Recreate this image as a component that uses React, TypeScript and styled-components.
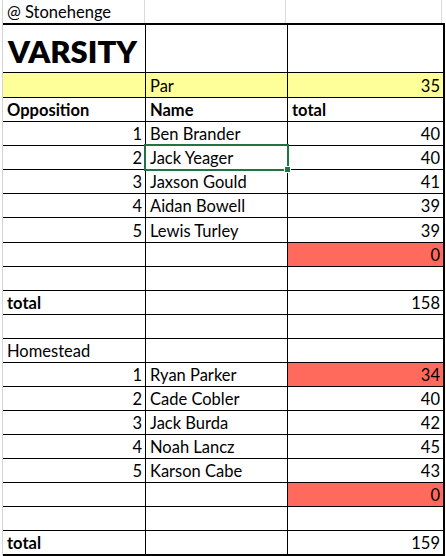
import React from "react";
import styled, { createGlobalStyle } from "styled-components";

const GlobalStyle = createGlobalStyle`
  html, body { margin: 0; padding: 0; background: #ffffff; }
  body { font-family: Lato, "Open Sans", sans-serif; color: #000; }
`;

const COLS = "142px 141px 155px";

const Page = styled.div`
  margin-left: 2px;
  border-left: 1px solid #d4d4d4;
  width: 443px;
  height: 556px;
  overflow: hidden;
`;

const TitleRow = styled.div`
  display: grid;
  grid-template-columns: 142px 141px 156px;
  height: 23px;
`;

const TitleCell = styled.div`
  border-right: 1px solid #dadada;
  display: flex;
  align-items: flex-end;
  padding: 0 4px 1px 4px;
  font-size: 16.5px;
  line-height: 20px;
  white-space: nowrap;
`;

const Sheet = styled.div`
  display: flex;
  flex-direction: column;
  gap: 1px;
  width: 440px;
  background: #000;
  border-top: 2px solid #000;
  border-right: 2px solid #000;
  border-bottom: 2px solid #000;
`;

const Row = styled.div<{ $h: number; $selected?: boolean }>`
  position: relative;
  display: grid;
  grid-template-columns: ${COLS};
  gap: 1px;
  height: ${(p) => p.$h}px;
  ${(p) =>
    p.$selected &&
    `&::before {
      content: "";
      position: absolute;
      left: -2px;
      top: -1px;
      bottom: -1px;
      width: 2px;
      background: #217346;
    }`}
`;

type Fill = "yellow" | "red" | undefined;

const fills: Record<string, string> = {
  yellow: "#ffff99",
  red: "#ff6a5c",
};

const Cell = styled.div<{
  $align?: "left" | "right";
  $bold?: boolean;
  $fill?: Fill;
  $big?: boolean;
  $selected?: boolean;
}>`
  position: relative;
  display: flex;
  align-items: flex-end;
  justify-content: ${(p) => (p.$align === "right" ? "flex-end" : "flex-start")};
  background: ${(p) => (p.$fill ? fills[p.$fill] : "#ffffff")};
  padding: ${(p) => (p.$big ? "0 4px 1px 5px" : "0 3px 1px 4px")};
  font-size: ${(p) => (p.$big ? "31px" : "16.5px")};
  font-weight: ${(p) => (p.$big ? 800 : p.$bold ? 700 : 400)};
  line-height: ${(p) => (p.$big ? "40px" : "20px")};
  white-space: nowrap;
  overflow: visible;
  z-index: ${(p) => (p.$selected ? 2 : "auto")};
`;

const Selection = styled.span`
  position: absolute;
  inset: -2px;
  border: 2px solid #217346;
  pointer-events: none;
`;

const Handle = styled.span`
  position: absolute;
  right: -3px;
  bottom: -3px;
  width: 5px;
  height: 5px;
  background: #217346;
  box-shadow: 0 0 0 1px #ffffff;
  pointer-events: none;
`;

type CellData = {
  text?: string;
  align?: "left" | "right";
  bold?: boolean;
  fill?: Fill;
  big?: boolean;
  selected?: boolean;
};

type RowData = { h: number; selected?: boolean; cells: CellData[] };

const player = (
  n: number,
  name: string,
  score: number,
  opts: { h?: number; red?: boolean; selected?: boolean } = {}
): RowData => ({
  h: opts.h ?? 23,
  selected: opts.selected,
  cells: [
    { text: String(n), align: "right" },
    { text: name, selected: opts.selected },
    { text: String(score), align: "right", fill: opts.red ? "red" : undefined },
  ],
});

const empty: RowData = { h: 23, cells: [{}, {}, {}] };
const zeroRow: RowData = {
  h: 23,
  cells: [{}, {}, { text: "0", align: "right", fill: "red" }],
};
const totalRow = (v: number): RowData => ({
  h: 23,
  cells: [{ text: "total", bold: true }, {}, { text: String(v), align: "right" }],
});

const rows: RowData[] = [
  { h: 47, cells: [{ text: "VARSITY", big: true }, {}, {}] },
  {
    h: 24,
    cells: [
      { fill: "yellow" },
      { text: "Par", fill: "yellow" },
      { text: "35", align: "right", fill: "yellow" },
    ],
  },
  {
    h: 23,
    cells: [
      { text: "Opposition", bold: true },
      { text: "Name", bold: true },
      { text: "total", bold: true },
    ],
  },
  player(1, "Ben Brander", 40),
  player(2, "Jack Yeager", 40, { selected: true }),
  player(3, "Jaxson Gould", 41),
  player(4, "Aidan Bowell", 39),
  player(5, "Lewis Turley", 39, { h: 24 }),
  zeroRow,
  empty,
  totalRow(158),
  empty,
  { h: 23, cells: [{ text: "Homestead" }, {}, {}] },
  player(1, "Ryan Parker", 34, { red: true }),
  player(2, "Cade Cobler", 40),
  player(3, "Jack Burda", 42),
  player(4, "Noah Lancz", 45),
  player(5, "Karson Cabe", 43),
  zeroRow,
  empty,
  totalRow(159),
];

export default function App() {
  return (
    <>
      <GlobalStyle />
      <Page>
        <TitleRow>
          <TitleCell>@ Stonehenge</TitleCell>
          <TitleCell />
          <TitleCell />
        </TitleRow>
        <Sheet>
          {rows.map((r, i) => (
            <Row key={i} $h={r.h} $selected={r.selected}>
              {r.cells.map((c, j) => (
                <Cell
                  key={j}
                  $align={c.align}
                  $bold={c.bold}
                  $fill={c.fill}
                  $big={c.big}
                  $selected={c.selected}
                >
                  {c.text}
                  {c.selected && (
                    <>
                      <Selection />
                      <Handle />
                    </>
                  )}
                </Cell>
              ))}
            </Row>
          ))}
        </Sheet>
      </Page>
    </>
  );
}
